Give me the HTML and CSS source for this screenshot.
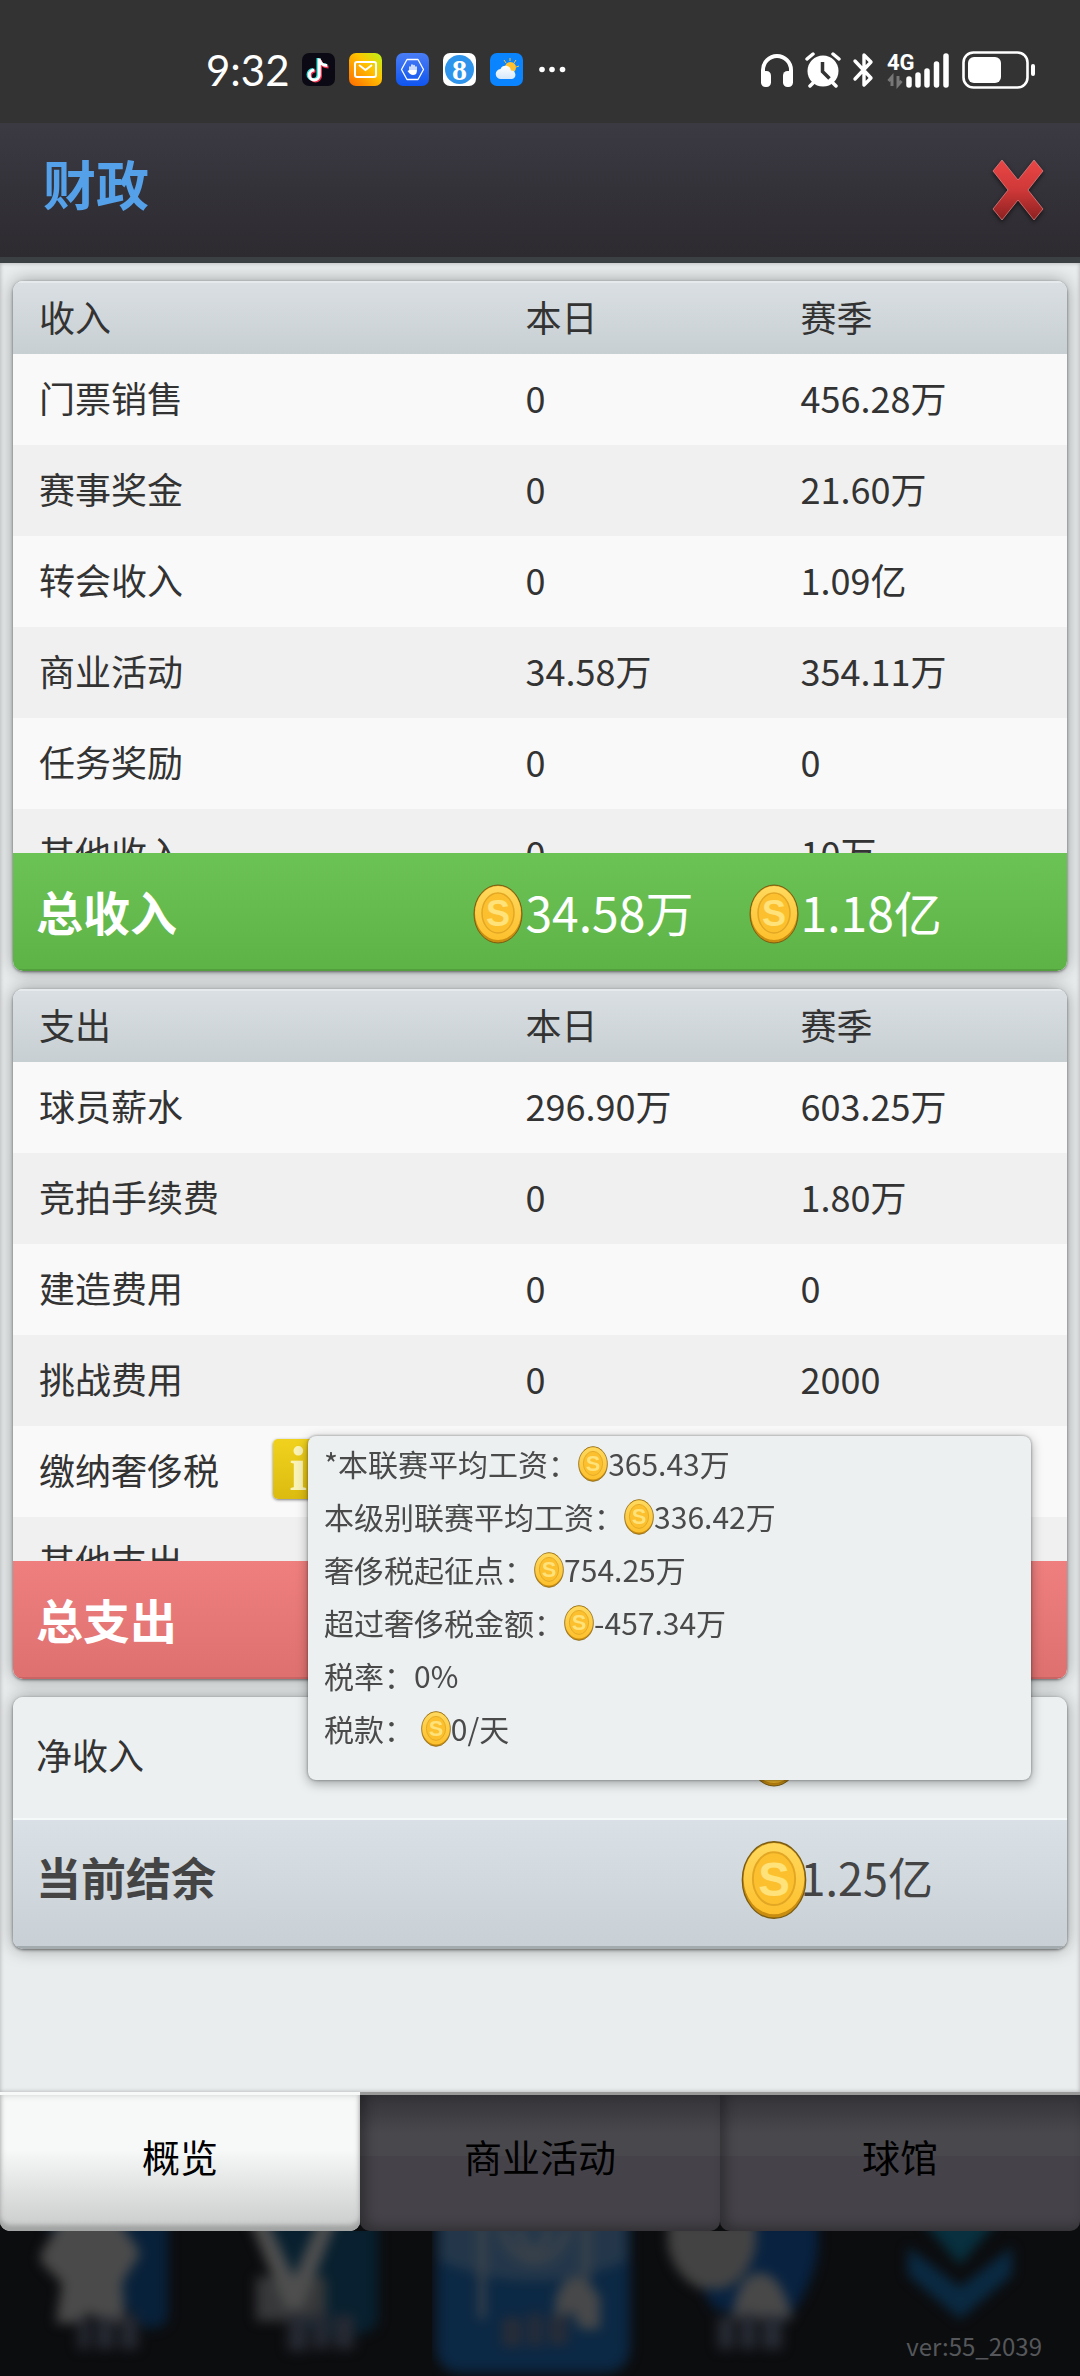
FILE: index.html
```html
<!DOCTYPE html>
<html lang="zh-CN">
<head>
    <meta charset="UTF-8">
    <meta name="viewport" content="width=device-width, initial-scale=1.0">
    <title>财政</title>
    <link rel="stylesheet" href="styles.css">
</head>
<body>
    <!-- Shared symbols -->
    <svg class="defs" aria-hidden="true">
        <defs>
            <linearGradient id="gold" x1="0" y1="0" x2="0" y2="1">
                <stop offset="0" stop-color="#ffd95e"/>
                <stop offset="1" stop-color="#fdc02d"/>
            </linearGradient>
            <linearGradient id="red" x1="0" y1="0" x2="0" y2="1">
                <stop offset="0" stop-color="#ea4646"/>
                <stop offset="0.5" stop-color="#cf3838"/>
                <stop offset="1" stop-color="#8c2020"/>
            </linearGradient>
            <linearGradient id="mail" x1="1" y1="0" x2="0" y2="1">
                <stop offset="0" stop-color="#b9f51a"/>
                <stop offset="0.4" stop-color="#ffc400"/>
                <stop offset="1" stop-color="#ff6a00"/>
            </linearGradient>
            <linearGradient id="guard" x1="0" y1="0" x2="0" y2="1">
                <stop offset="0" stop-color="#4a7df5"/>
                <stop offset="1" stop-color="#0f55f0"/>
            </linearGradient>
            <linearGradient id="cloud" x1="0" y1="0" x2="0" y2="1">
                <stop offset="0" stop-color="#fff"/>
                <stop offset="1" stop-color="#d5e8fb"/>
            </linearGradient>
            <filter id="soft" x="-20%" y="-20%" width="140%" height="140%" color-interpolation-filters="sRGB">
                <feGaussianBlur stdDeviation="6"/>
            </filter>
        </defs>
        <symbol id="coin" viewBox="0 0 50 60">
            <ellipse cx="25" cy="30" rx="24" ry="29" fill="#c98d10" stroke="#7a5c12" stroke-width="1"/>
            <ellipse cx="25" cy="29" rx="23" ry="27" fill="url(#gold)"/>
            <ellipse cx="25" cy="29" rx="16" ry="20" fill="#fcc02f" stroke="#e3a724" stroke-width="1.5"/>
            <text x="25" y="42" text-anchor="middle" class="coin-mark">S</text>
        </symbol>
    </svg>

    <!-- Phone status bar -->
    <div class="status-bar">
        <div class="status-left">
            <span class="clock">9:32</span>
            <svg class="app-icon" viewBox="0 0 33 33">
                <rect width="33" height="33" rx="7" fill="#0b0a14"/>
                <g fill="none" stroke-width="3">
                    <path d="M16 5v16.500a5 5 0 1 1-5-5M16 6c1 4 4 6 8 6" stroke="#2ee6e0"/>
                    <path d="M18.500 7v16a5 5 0 1 1-5-5M18.500 8c1 4 4 6 8 6" stroke="#f5314f"/>
                    <path d="M17.300 5.500v16.500a5 5 0 1 1-5-5M17.300 6.500c1 4 4 6 8 6" stroke="#fff"/>
                </g>
            </svg>
            <svg class="app-icon" viewBox="0 0 33 33">
                <rect width="33" height="33" rx="7" fill="url(#mail)"/>
                <rect x="6" y="9" width="21" height="15" rx="2" fill="none" stroke="#fff" stroke-width="2"/>
                <path d="M10 12l6.500 5 6.500-5" fill="none" stroke="#fff" stroke-width="2"/>
            </svg>
            <svg class="app-icon" viewBox="0 0 33 33">
                <rect width="33" height="33" rx="7" fill="url(#guard)"/>
                <path d="M11 6.500h11l5.500 10-5.500 10H11l-5.500-10z" fill="none" stroke="#fff" stroke-width="1.300" stroke-linejoin="round"/>
                <path d="M14 19v-5M16 18v-6M18 18v-5.500M20 18v-4" stroke="#fff" stroke-width="1.500" stroke-linecap="round"/>
                <path d="M13.300 17h7.400V19c0 2-1.500 3-3.700 3s-3.500-1.500-5.500-4z" fill="#fff"/>
            </svg>
            <svg class="app-icon" viewBox="0 0 33 33">
                <rect width="33" height="33" rx="7" fill="#fff"/>
                <circle cx="16.500" cy="16.500" r="14.500" fill="#2f94ec"/>
                <text x="16.500" y="27" text-anchor="middle" class="eight">8</text>
            </svg>
            <svg class="app-icon" viewBox="0 0 33 33">
                <rect width="33" height="33" rx="7" fill="#0a84ff"/>
                <path d="M20 5v3M14 7l2 3M26 7l-2 3M29 13l-3 1" stroke="#ffc22e" stroke-width="1"/>
                <circle cx="20.500" cy="14.500" r="5.500" fill="#ffc22e"/>
                <path d="M11 26a5 5 0 0 1-.5-10 5.500 5.500 0 0 1 10.500 1.500A4.300 4.300 0 0 1 22 26z" fill="url(#cloud)"/>
            </svg>
            <svg class="more" viewBox="0 0 30 33">
                <g fill="#fff"><circle cx="5" cy="16.500" r="2.800"/><circle cx="15" cy="16.500" r="2.800"/><circle cx="25.500" cy="16.500" r="2.800"/></g>
            </svg>
        </div>
        <div class="status-right">
            <svg width="34" height="36" viewBox="0 0 34 36">
                <path d="M3 26V18a14 14 0 0 1 28 0v8" fill="none" stroke="#fff" stroke-width="4"/>
                <rect x="1" y="19" width="10" height="16" rx="4.500" fill="#fff"/>
                <rect x="23" y="19" width="10" height="16" rx="4.500" fill="#fff"/>
            </svg>
            <svg width="36" height="36" viewBox="0 0 36 36">
                <circle cx="18" cy="19" r="15.500" fill="#fff"/>
                <path d="M2 7l6-5M34 7l-6-5M8 31l-3 3M28 31l3 3" stroke="#fff" stroke-width="3.500" stroke-linecap="round"/>
                <path d="M17.500 10v9.500l7 7" fill="none" stroke="#333" stroke-width="3.500"/>
            </svg>
            <svg width="24" height="36" viewBox="0 0 24 36">
                <path d="M3 9l16 17-7 7V3l7 7L3 27" fill="none" stroke="#fff" stroke-width="3.400" stroke-linejoin="round" stroke-linecap="round"/>
            </svg>
            <svg class="signal" width="64" height="36" viewBox="0 0 64 36">
                <text x="0" y="18" class="network">4G</text>
                <path d="M5 34V25l-3.500 4M11 24v9l3.500-4" fill="none" stroke="#777" stroke-width="3"/>
                <path d="M22 27v6M31 23v10M40 19v14M49.500 12v21M59 4v29" stroke="#fff" stroke-width="5.500" stroke-linecap="round"/>
            </svg>
            <svg width="74" height="38" viewBox="0 0 74 38">
                <rect x="1.500" y="1.500" width="64" height="35" rx="10" fill="none" stroke="#fff" stroke-width="2.600"/>
                <rect x="6" y="6" width="33" height="26" rx="6" fill="#fff"/>
                <rect x="69" y="13" width="4" height="12" rx="2" fill="#fff"/>
            </svg>
        </div>
    </div>

    <!-- Title bar -->
    <header class="title-bar">
        <h1>财政</h1>
        <button type="button" class="close-btn" aria-label="关闭">
            <svg viewBox="0 0 54 64">
                <path d="M2 13L11 2l16 20L43 2l9 11-15 19 15 19-9 11-16-20-16 20-9-11 15-19z" fill="url(#red)" stroke="#e88a8a" stroke-opacity="0.7" stroke-width="1"/>
            </svg>
        </button>
    </header>

    <main class="content">
        <!-- Income -->
        <section class="panel scroll-panel">
            <table>
                <thead>
                    <tr><th>收入</th><th>本日</th><th>赛季</th></tr>
                </thead>
                <tbody>
                    <tr><td>门票销售</td><td>0</td><td>456.28万</td></tr>
                    <tr><td>赛事奖金</td><td>0</td><td>21.60万</td></tr>
                    <tr><td>转会收入</td><td>0</td><td>1.09亿</td></tr>
                    <tr><td>商业活动</td><td>34.58万</td><td>354.11万</td></tr>
                    <tr><td>任务奖励</td><td>0</td><td>0</td></tr>
                    <tr><td>其他收入</td><td>0</td><td>10万</td></tr>
                </tbody>
                <tfoot class="total-income">
                    <tr>
                        <th>总收入</th>
                        <td><div class="money"><span class="coin-slot"><svg class="coin"><use href="#coin"/></svg></span>34.58万</div></td>
                        <td><div class="money"><span class="coin-slot"><svg class="coin"><use href="#coin"/></svg></span>1.18亿</div></td>
                    </tr>
                </tfoot>
            </table>
        </section>

        <!-- Expenses -->
        <div class="expense-wrap">
            <section class="panel scroll-panel">
                <table>
                    <thead>
                        <tr><th>支出</th><th>本日</th><th>赛季</th></tr>
                    </thead>
                    <tbody>
                        <tr><td>球员薪水</td><td>296.90万</td><td>603.25万</td></tr>
                        <tr><td>竞拍手续费</td><td>0</td><td>1.80万</td></tr>
                        <tr><td>建造费用</td><td>0</td><td>0</td></tr>
                        <tr><td>挑战费用</td><td>0</td><td>2000</td></tr>
                        <tr>
                            <td><div class="with-info">缴纳奢侈税<button type="button" class="info-btn" aria-describedby="tax-tip">i</button></div></td>
                            <td></td>
                            <td></td>
                        </tr>
                        <tr><td>其他支出</td><td></td><td></td></tr>
                    </tbody>
                    <tfoot class="total-expense">
                        <tr><th>总支出</th><td></td><td></td></tr>
                    </tfoot>
                </table>
            </section>

            <!-- Luxury tax tooltip -->
            <div class="tooltip" id="tax-tip" role="tooltip">
                <p>*本联赛平均工资：<svg class="coin-small"><use href="#coin"/></svg>365.43万</p>
                <p>本级别联赛平均工资：<svg class="coin-small"><use href="#coin"/></svg>336.42万</p>
                <p>奢侈税起征点：<svg class="coin-small"><use href="#coin"/></svg>754.25万</p>
                <p>超过奢侈税金额：<svg class="coin-small"><use href="#coin"/></svg>-457.34万</p>
                <p>税率：0%</p>
                <p>税款： <svg class="coin-small"><use href="#coin"/></svg>0/天</p>
            </div>
        </div>

        <!-- Balance -->
        <section class="panel">
            <table class="summary">
                <tbody>
                    <tr class="net">
                        <th>净收入</th>
                        <td></td>
                        <td><div class="money"><span class="coin-slot"><svg class="coin"><use href="#coin"/></svg></span></div></td>
                    </tr>
                    <tr class="balance">
                        <th>当前结余</th>
                        <td></td>
                        <td><div class="money"><span class="coin-slot"><svg class="coin-big"><use href="#coin"/></svg></span>1.25亿</div></td>
                    </tr>
                </tbody>
            </table>
        </section>
    </main>

    <div class="tabs" role="tablist">
        <button type="button" role="tab" class="tab active" aria-selected="true">概览</button>
        <button type="button" role="tab" class="tab" aria-selected="false">商业活动</button>
        <button type="button" role="tab" class="tab" aria-selected="false">球馆</button>
    </div>

    <!-- Dimmed game menu behind the dialog -->
    <footer class="game-menu">
        <svg viewBox="0 0 216 145">
            <g filter="url(#soft)">
                <path d="M42-10H168V86Q165 98 146 98L110 60z" fill="#08213a"/>
                <path d="M66-20h46l26 38q4 8-4 14l-12 20 4 40H104L90 82 76 92H56l6-40-20-20q-4-8 2-14z" fill="#4a4a4a"/>
                <path d="M78 88h12v30H78zM96 86h18v32H96zM120 84h18v34h-18z" fill="#262932"/>
            </g>
        </svg>
        <svg viewBox="0 0 216 145">
            <g filter="url(#soft)">
                <path d="M50-10H162V90Q158 108 100 106L60 60z" fill="#08202f"/>
                <path d="M40 46h70v44H40z" fill="#363839"/>
                <path d="M32-14h18l28 60 26-60h18L86 78H70z" fill="#4e4e4e"/>
                <path d="M72 84h20v36H72zM97 82h16v36H97zM118 84h20v34h-20z" fill="#262932"/>
            </g>
        </svg>
        <svg viewBox="0 0 216 145">
            <g filter="url(#soft)">
                <rect x="4" y="-30" width="194" height="172" rx="24" fill="#0b2844"/>
                <path d="M8-20h186v50q-90 40-186 0z" fill="#24374a"/>
                <path d="M50-8v96M154-8v70M70-4a34 44 0 0 0 66 0M88-4a14 24 0 0 0 28 0" fill="none" stroke="#3f444a" stroke-width="7"/>
                <path d="M124 66q16-40 44 0v32h-20l-8-18-18 14z" fill="#474849"/>
                <path d="M70 86h20v30H70zM96 82h14v34H96zM116 84h20v30h-20z" fill="#272c38"/>
            </g>
        </svg>
        <svg viewBox="0 0 216 145">
            <g filter="url(#soft)">
                <path d="M50-10H170V20Q164 60 136 92L66 78 50 50z" fill="#082240"/>
                <path d="M20-10h88v26q-8 34-34 42h-20q-26-10-34-42z" fill="#434343"/>
                <path d="M84 88q6-46 28-46t32 46z" fill="#484848"/>
                <path d="M70 86h16v32H70zM92 82h16v36H92zM114 84h20v34h-20z" fill="#272b34"/>
            </g>
        </svg>
        <svg viewBox="0 0 216 145">
            <g filter="url(#soft)">
                <path d="M50-20h92L96 34z" fill="#08303f"/>
                <path d="M44 16l52 40 52-40v28L96 88 44 44z" fill="#0a2a42"/>
            </g>
        </svg>
        <span class="version">ver:55_2039</span>
    </footer>
</body>
</html>
```

FILE: styles.css
```css
* {
    box-sizing: border-box;
}

body {
    display: flex;
    flex-direction: column;
    min-height: 100vh;
    margin: 0;
    font-family: "Noto Sans CJK SC", sans-serif;
    font-size: 36px;
    color: #333;
    background-color: #0c0d0f;
}

button {
    border: none;
    padding: 0;
    font-family: inherit;
    cursor: pointer;
}

.defs {
    position: absolute;
    width: 0;
    height: 0;
}

.coin-mark {
    font: bold 36px "Liberation Sans", sans-serif;
    fill: #ffe27a;
}

/* Status bar */
.status-bar {
    display: flex;
    justify-content: space-between;
    align-items: center;
    height: 123px;
    padding: 16px 44px 0 206px;
    background-color: #333;
}

.status-left, .status-right {
    display: flex;
    align-items: center;
}

.status-left {
    gap: 14px;
}

.status-right {
    gap: 11px;
}

.clock {
    margin-right: -2px;
    font-family: Lato, sans-serif;
    font-size: 42px;
    line-height: 48px;
    color: #fff;
}

.app-icon {
    width: 33px;
    height: 33px;
}

.more {
    width: 30px;
    height: 33px;
}

.eight {
    font: bold 30px "Liberation Serif", serif;
    fill: #fff;
}

.signal {
    overflow: visible;
}

.network {
    font: bold 22px Roboto, sans-serif;
    fill: #fff;
}

/* Title bar */
.title-bar {
    display: flex;
    justify-content: space-between;
    align-items: center;
    height: 140px;
    padding: 0 35px 0 43px;
    background: linear-gradient(#3b3942, #2d2b30);
    border-bottom: 6px solid #3b4143;
}

.title-bar h1 {
    margin: 0;
    padding-bottom: 14px;
    font-size: 53px;
    font-weight: bold;
    line-height: 72px;
    color: #54a1ea;
}

.close-btn {
    width: 54px;
    height: 64px;
    background: none;
}

.close-btn svg {
    display: block;
    width: 100%;
    height: 100%;
    overflow: visible;
    filter: drop-shadow(0 2px 2px rgba(0, 0, 0, 0.6));
}

/* Content */
.content {
    flex: 1;
    display: flex;
    flex-direction: column;
    gap: 18px;
    padding: 18px 13px;
    background-color: #e9edee;
    box-shadow: inset 0 0 4px #aaa;
}

.panel {
    overflow: hidden;
    border-radius: 10px;
    background-color: #ecf0f1;
    box-shadow: 0 0 18px rgba(0, 0, 0, 0.35), 0 1px 3px rgba(0, 0, 0, 0.5);
}

.scroll-panel {
    height: 690px;
    overflow-y: auto;
    scrollbar-width: none;
}

table {
    width: 100%;
    table-layout: fixed;
    border-collapse: separate;
    border-spacing: 0;
}

th, td {
    padding: 0 0 5px 54px;
    text-align: left;
    font-weight: normal;
    white-space: nowrap;
    line-height: 48px;
}

th:first-child, td:first-child {
    width: 43.5%;
    padding-left: 26px;
}

th:nth-child(2), td:nth-child(2) {
    width: 26.1%;
}

thead {
    position: sticky;
    top: 0;
}

thead th {
    height: 73px;
    background: linear-gradient(#d9dfe2, #c8cfd2);
    border-top: 2px solid #e6eaec;
}

tbody td {
    height: 91px;
    background-color: #f0f0f0;
}

tbody tr:nth-child(odd) td {
    background-color: #f9f9f9;
}

tfoot {
    position: sticky;
    bottom: 0;
    font-size: 48px;
    color: #fff;
}

tfoot th, tfoot td {
    height: 118px;
    padding: 0;
}

tfoot th {
    font-size: 47px;
    font-weight: bold;
}

.total-income th, .total-income td {
    background: linear-gradient(#6cc355, #5eb347);
    border-bottom: 2px solid #549f40;
}

.total-expense th, .total-expense td {
    background: linear-gradient(#ee7f7e, #de7170);
    border-bottom: 2px solid #c96564;
}

.money {
    display: flex;
    align-items: center;
}

.coin-slot {
    display: flex;
    justify-content: center;
    flex: none;
    width: 54px;
    padding-top: 6px;
}

.coin, .coin-big, .coin-small {
    flex: none;
    width: 50px;
    height: 60px;
}

.coin-big {
    width: 66px;
    height: 80px;
}

.with-info {
    display: flex;
    align-items: center;
    gap: 54px;
}

.info-btn {
    width: 50px;
    height: 60px;
    border-radius: 5px;
    background: linear-gradient(#f0d21e, #dcbb10);
    box-shadow: 0 1px 3px rgba(0, 0, 0, 0.5);
    font: bold 64px/60px "Liberation Serif", serif;
    color: #faf3b8;
}

/* Tooltip */
.expense-wrap {
    position: relative;
}

.tooltip {
    position: absolute;
    top: 447px;
    left: 28%;
    right: 36px;
    z-index: 1;
    height: 344px;
    padding: 1px 16px;
    border-radius: 8px;
    background-color: #ecf0f1;
    box-shadow: 0 3px 12px rgba(0, 0, 0, 0.35), 0 0 3px rgba(0, 0, 0, 0.4);
    font-size: 30px;
    line-height: 53px;
    color: #4a4a4a;
}

.tooltip p {
    display: flex;
    align-items: center;
    height: 53px;
    margin: 0;
    white-space: pre;
}

.coin-small {
    width: 30px;
    height: 36px;
}

/* Balance */
.summary th, .summary td {
    padding: 0 0 8px;
}

.summary .net th, .summary .net td {
    height: 123px;
    background-color: #ecf0f1;
    border-bottom: 2px solid #f6f9f9;
}

.summary .balance th, .summary .balance td {
    height: 129px;
    padding-bottom: 12px;
    background: linear-gradient(#d9e1e7, #c9d0d5);
    border-bottom: 3px solid #a3abaf;
    color: #444;
}

.summary .balance th {
    font-size: 45px;
    font-weight: bold;
}

.summary .balance td {
    font-size: 45px;
}

tfoot th:first-child, .summary th:first-child {
    padding-left: 23px;
}

/* Tabs */
.tabs {
    display: grid;
    grid-template-columns: repeat(3, 1fr);
    height: 139px;
}

.tab {
    padding-bottom: 16px;
    border-top: 3px solid #999;
    border-radius: 0 0 10px 10px;
    background: linear-gradient(#343338, #49484d 28%, #49484d 45%, #454349 45%);
    box-shadow: inset 6px -4px 12px rgba(0, 0, 0, 0.3);
    font-size: 38px;
    color: #000;
}

.tab.active {
    border-top-color: #f7f9f9;
    background: linear-gradient(#f7f9f9 40%, #c9cbca);
    box-shadow: inset 0 -6px 4px #a2a4a3, inset 0 0 6px #ccc;
}

/* Game menu */
.game-menu {
    position: relative;
    display: grid;
    grid-template-columns: repeat(5, 1fr);
    height: 145px;
    overflow: hidden;
}

.game-menu svg {
    width: 100%;
    height: 145px;
}

.version {
    position: absolute;
    right: 38px;
    bottom: 12px;
    font-size: 24px;
    line-height: 36px;
    color: #55575a;
}
```
